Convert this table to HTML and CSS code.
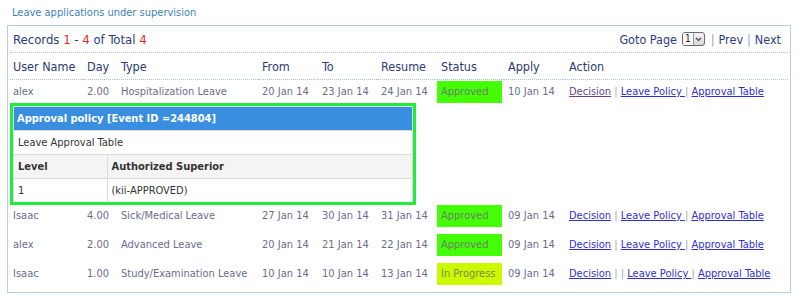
FILE: index.html
```html
<!DOCTYPE html>
<html>
<head>
<meta charset="utf-8">
<link rel="stylesheet" href="styles.css">
</head>
<body>
<div class="title">Leave applications under supervision</div>
<div class="panel">
  <div class="bar">
    <div class="records">Records <span class="red">1</span> - <span class="red">4</span> of Total <span class="red">4</span></div>
    <div class="pager">Goto Page <span class="sel"><span class="sel-val">1</span><span class="sel-btn"><svg width="7" height="5" viewBox="0 0 7 5"><path d="M1 1 L3.5 3.5 L6 1" fill="none" stroke="#444" stroke-width="1.2"/></svg></span></span> <span class="psep">|</span> <span class="plink">Prev</span> <span class="psep">|</span> <span class="plink">Next</span></div>
  </div>
  <table class="grid">
    <colgroup>
      <col class="c-user"><col class="c-day"><col class="c-type"><col class="c-from"><col class="c-to"><col class="c-res"><col class="c-stat"><col class="c-apply"><col>
    </colgroup>
    <thead>
      <tr><th class="th-user">User Name</th><th>Day</th><th>Type</th><th>From</th><th>To</th><th>Resume</th><th>Status</th><th>Apply</th><th>Action</th></tr>
    </thead>
    <tbody>
      <tr class="row first">
        <td class="td-user">alex</td><td class="num">2.00</td><td>Hospitalization Leave</td><td>20 Jan 14</td><td>23 Jan 14</td><td>24 Jan 14</td>
        <td class="stat"><div class="badge ok">Approved</div></td><td>10 Jan 14</td>
        <td class="act"><a class="lnk visited">Decision</a> <span class="sep">|</span> <a class="lnk">Leave Policy </a><span class="sep">|</span> <a class="lnk">Approval Table</a></td>
      </tr>
      <tr class="policy-row">
        <td colspan="9">
          <div class="policy">
            <div class="pol-inner">
              <div class="pol-head">Approval policy [Event ID =244804]</div>
              <table class="pol-table">
                <colgroup><col class="pc-level"><col></colgroup>
                <tr><td colspan="2">Leave Approval Table</td></tr>
                <tr class="pol-th"><td class="bl">Level</td><td>Authorized Superior</td></tr>
                <tr class="last"><td class="bl">1</td><td>(kii-APPROVED)</td></tr>
              </table>
            </div>
          </div>
        </td>
      </tr>
      <tr class="row">
        <td class="td-user">Isaac</td><td class="num">4.00</td><td>Sick/Medical Leave</td><td>27 Jan 14</td><td>30 Jan 14</td><td>31 Jan 14</td>
        <td class="stat"><div class="badge ok">Approved</div></td><td>09 Jan 14</td>
        <td class="act"><a class="lnk">Decision</a> <span class="sep">|</span> <a class="lnk">Leave Policy </a><span class="sep">|</span> <a class="lnk">Approval Table</a></td>
      </tr>
      <tr class="row">
        <td class="td-user">alex</td><td class="num">2.00</td><td>Advanced Leave</td><td>20 Jan 14</td><td>21 Jan 14</td><td>22 Jan 14</td>
        <td class="stat"><div class="badge ok">Approved</div></td><td>09 Jan 14</td>
        <td class="act"><a class="lnk">Decision</a> <span class="sep">|</span> <a class="lnk">Leave Policy </a><span class="sep">|</span> <a class="lnk">Approval Table</a></td>
      </tr>
      <tr class="row">
        <td class="td-user">Isaac</td><td class="num">1.00</td><td>Study/Examination Leave</td><td>10 Jan 14</td><td>10 Jan 14</td><td>13 Jan 14</td>
        <td class="stat"><div class="badge prog">In Progress</div></td><td>09 Jan 14</td>
        <td class="act"><a class="lnk">Decision</a> <span class="sep">|</span> <span class="sep">|</span> <a class="lnk">Leave Policy </a><span class="sep">|</span> <a class="lnk">Approval Table</a></td>
      </tr>
    </tbody>
  </table>
</div>
</body>
</html>
```

FILE: styles.css
```css
html, body {
  margin: 0;
  background: #ffffff;
}
body {
  padding: 6px 9px 0 7px;
  font-family: "DejaVu Sans Condensed", "DejaVu Sans", sans-serif;
  font-stretch: condensed;
}
.title {
  height: 14px;
  line-height: 14px;
  margin: 0 0 5px 5px;
  font-size: 11px;
  color: #3d7fb8;
}
.panel {
  border: 1px solid #b6cfe2;
  padding: 0 2px 0 2px;
}
.bar {
  height: 26px;
  display: flex;
  justify-content: space-between;
  align-items: center;
  border-bottom: 1px dotted #a9c2d8;
}
.records {
  padding-left: 3px;
  font-size: 13px;
  color: #2c3a80;
}
.red { color: #e8262a; }
.pager {
  padding-right: 7px;
  font-size: 12.5px;
  color: #2c3a80;
  display: flex;
  align-items: center;
  gap: 4px;
}
.psep { color: #8aa8c8; }
.plink { color: #2c3a80; }
.sel {
  display: inline-flex;
  align-items: stretch;
  height: 12px;
  border: 1px solid #6a6a6a;
  border-radius: 3px;
  background: linear-gradient(#f4f4f4, #d8d8d8);
  margin: 0 2px 0 1px;
  overflow: hidden;
}
.sel-val {
  font-size: 10px;
  line-height: 12px;
  padding: 0 2px 0 2px;
  color: #222;
  background: #fff;
}
.sel-btn {
  width: 10px;
  border-left: 1px solid #999;
  display: flex;
  align-items: center;
  justify-content: center;
}
.grid {
  width: 100%;
  border-collapse: collapse;
  table-layout: fixed;
}
.c-user { width: 73px; }
.c-day { width: 34px; }
.c-type { width: 141px; }
.c-from { width: 60px; }
.c-to { width: 59px; }
.c-res { width: 60px; }
.c-stat { width: 67px; }
.c-apply { width: 61px; }
.grid th {
  height: 26px;
  padding: 0 0 0 4px;
  text-align: left;
  font-weight: normal;
  font-size: 12.5px;
  color: #2b3a72;
  border-bottom: 1px dotted #a9c2d8;
  white-space: nowrap;
}
.grid th.th-user { padding-left: 3px; }
.row td {
  vertical-align: top;
  padding: 0 0 7px 4px;
  line-height: 22px;
  font-size: 11px;
  color: #6c6c8a;
  white-space: nowrap;
}
.row.first td { padding-top: 1px; padding-bottom: 0; }
.row td.td-user { padding-left: 3px; }
.row td.num { text-align: right; padding-right: 8px; padding-left: 0; }
.row td.stat { padding-left: 0; }
.badge {
  width: 61px;
  height: 22px;
  padding-left: 4px;
  line-height: 22px;
}
.badge.ok { background: #44fe05; color: #6a7e6a; }
.badge.prog { background: #ccf800; color: #7c8a4a; }
.act { color: #9aa6c0; }
.lnk {
  color: #2f2fd0;
  text-decoration: underline;
}
.lnk.visited { color: #6a3f8e; }
.sep { color: #9aa8c2; }
.policy-row td { padding: 0; }
.policy {
  width: 400px;
  border: 3px solid #21ec3e;
}
.pol-inner {
  border: 1px solid #dcdcdc;
  border-bottom: none;
  font-size: 11px;
  color: #333;
}
.pol-head {
  height: 23px;
  line-height: 23px;
  padding-left: 3px;
  background: #3a8ee0;
  color: #fff;
  font-weight: bold;
}
.pol-table {
  width: 100%;
  border-collapse: collapse;
  table-layout: fixed;
}
.pc-level { width: 93px; }
.pol-table td {
  height: 23px;
  padding: 0 0 0 4px;
  border-top: 1px solid #dcdcdc;
  line-height: 23px;
  white-space: nowrap;
}
.pol-table td.bl { border-right: 1px solid #dcdcdc; }
.pol-th td { background: #f4f4f4; font-weight: bold; }
.pol-table tr.last td { height: 22px; }
```
